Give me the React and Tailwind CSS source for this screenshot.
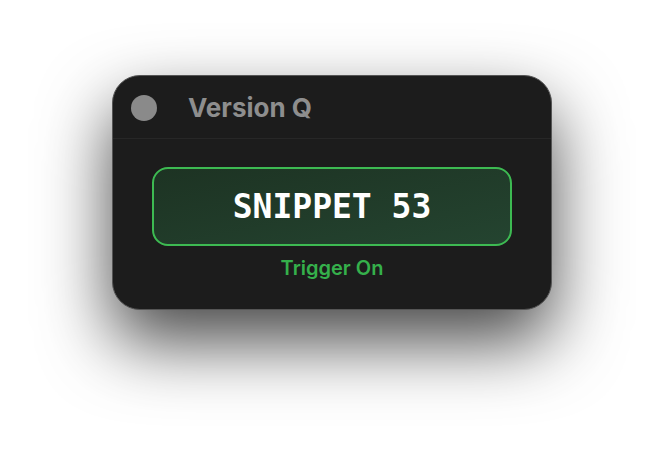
export default function App() {
  return (
    <div className="w-[664px] h-[458px] bg-white flex justify-center pt-[75px]">
      <div className="w-[440px] h-[235px] rounded-[28px] bg-[#1c1c1c] border border-[#555555] shadow-[0_32px_70px_rgba(0,0,0,0.72)] flex flex-col overflow-hidden">
        <div className="h-[63px] flex items-center border-b border-[#272727] pl-[18px] pt-[2px]">
          <div className="w-[26px] h-[26px] rounded-full bg-[#8a8a8a]" />
          <div className="ml-[31px] text-[26px] font-bold text-[#8e8e8e] leading-none" style={{ fontFamily: 'Inter, "Liberation Sans", sans-serif' }}>
            Version Q
          </div>
        </div>
        <div className="flex-1 flex flex-col items-center pt-[28px]">
          <div className="w-[360px] h-[79px] rounded-[16px] border-2 border-[#3dba52] bg-gradient-to-br from-[#1d3323] to-[#244430] flex items-center justify-center">
            <span className="text-[33px] font-bold text-white leading-none" style={{ fontFamily: '"DejaVu Sans Mono", "Liberation Mono", monospace' }}>
              SNIPPET 53
            </span>
          </div>
          <div className="mt-[12px] text-[20px] font-semibold text-[#35b04b] leading-none" style={{ fontFamily: 'Inter, "Liberation Sans", sans-serif' }}>
            Trigger On
          </div>
        </div>
      </div>
    </div>
  );
}
